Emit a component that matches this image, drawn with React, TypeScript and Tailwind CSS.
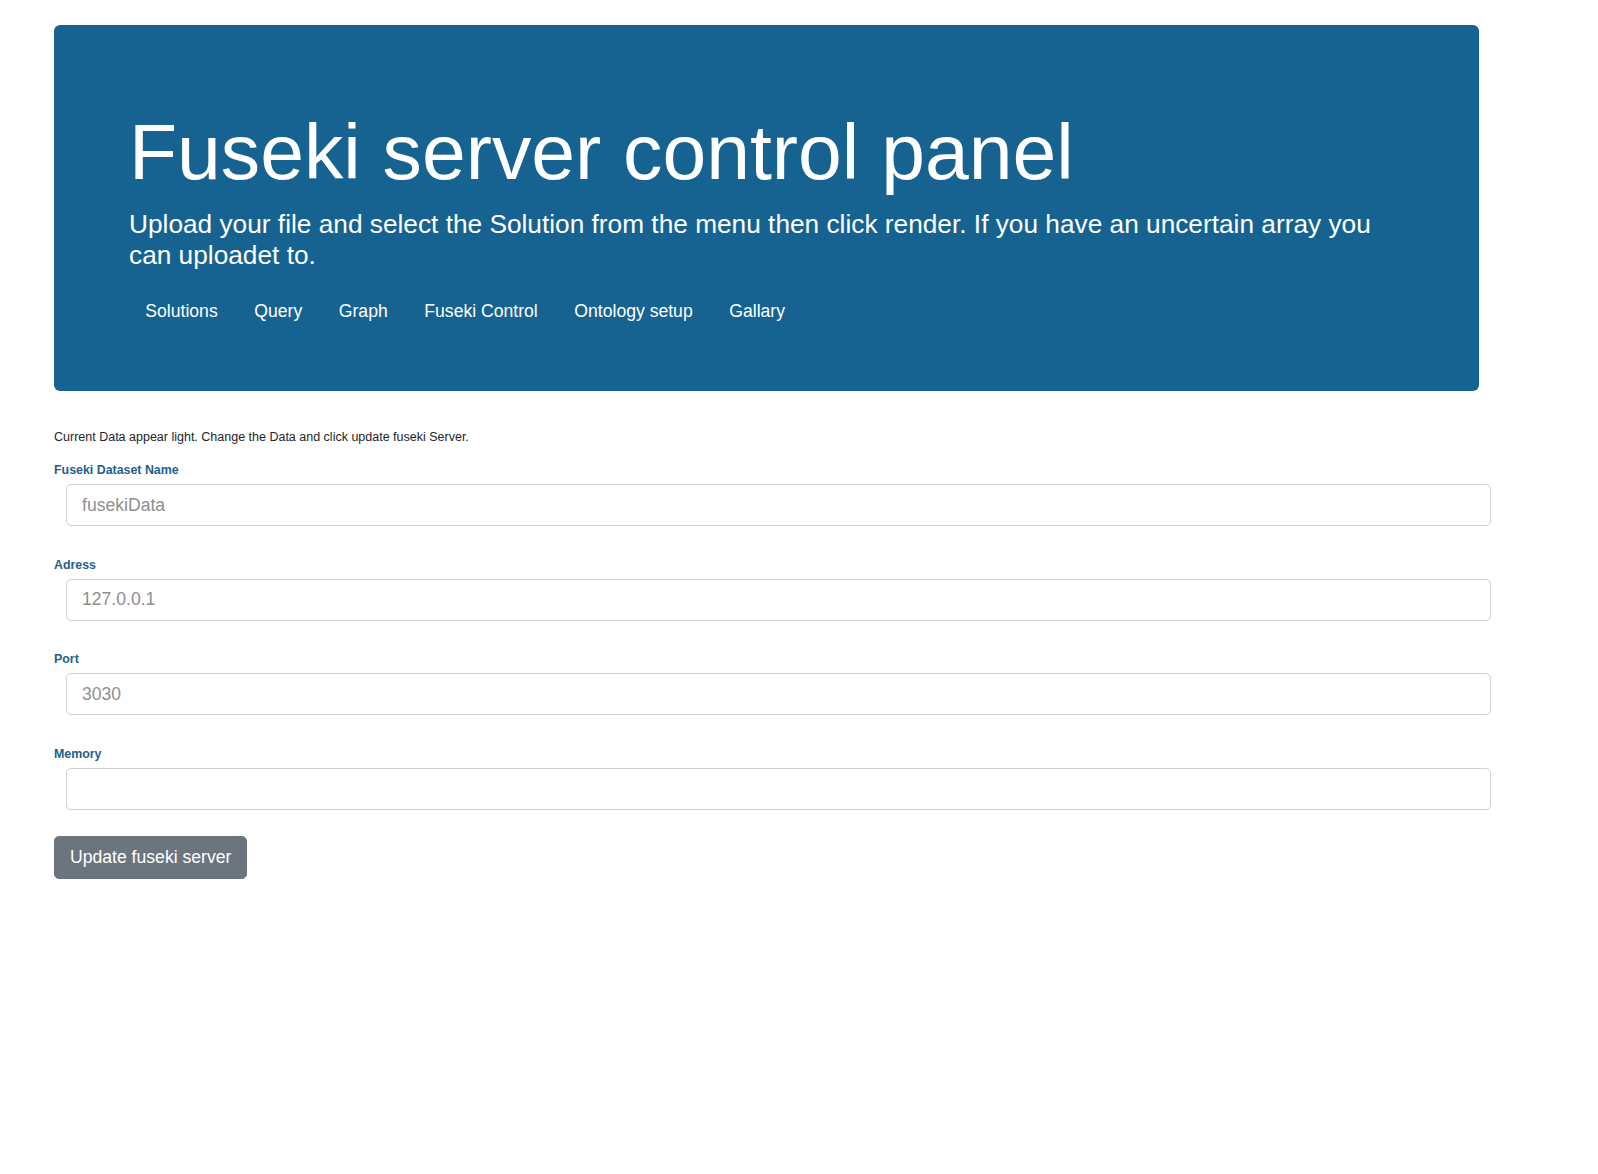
import React from 'react';

const navItems = ['Solutions', 'Query', 'Graph', 'Fuseki Control', 'Ontology setup', 'Gallary'];

const fields = [
  { label: 'Fuseki Dataset Name', placeholder: 'fusekiData' },
  { label: 'Adress', placeholder: '127.0.0.1' },
  { label: 'Port', placeholder: '3030' },
  { label: 'Memory', placeholder: '' },
];

const App: React.FC = () => {
  return (
    <div className="min-h-screen bg-white font-['Liberation_Sans',Arial,sans-serif] text-[#212529]">
      <div className="w-[1479px] pl-[54px] pt-[25px]">
        {/* Header banner */}
        <div className="bg-[#166391] rounded-[6px] pl-[75px] pr-[95px] pt-[80px] pb-[58.5px] text-white">
          <h1 className="text-[78.7px] leading-[1.2] font-normal">Fuseki server control panel</h1>
          <p className="mt-[9.5px] text-[26.25px] leading-[31px]">
            Upload your file and select the Solution from the menu then click render. If you have an uncertain array you can uploadet to.
          </p>
          <nav className="mt-[18px] -ml-[2px] flex">
            {navItems.map((item) => (
              <a key={item} href="#" className="px-[18.3px] py-[8.8px] text-[17.6px] leading-[26.4px] text-white">
                {item}
              </a>
            ))}
          </nav>
        </div>

        {/* Form */}
        <div className="mt-[36.5px]">
          <p className="text-[12.5px] leading-[19px]">
            Current Data appear light. Change the Data and click update fuseki Server.
          </p>
          <div className="mt-[14.5px] flex flex-col gap-[29.5px]">
            {fields.map((f) => (
              <div key={f.label}>
                <label className="block text-[12.4px] leading-[19px] font-bold text-[#1f5f8b] mb-[4px]">{f.label}</label>
                <div className="pl-[12px] -mr-[12px]">
                  <input
                    type="text"
                    placeholder={f.placeholder}
                    className="w-full h-[42px] border border-[#cfcfcf] rounded-[5px] px-[15px] text-[17.6px] placeholder:text-[#8f8f8f] outline-none"
                  />
                </div>
              </div>
            ))}
          </div>
          <button className="mt-[26px] h-[43px] rounded-[5px] bg-[#6c757d] border border-[#6c757d] px-[15px] text-[17.6px] leading-[26.4px] text-white">
            Update fuseki server
          </button>
        </div>
      </div>
    </div>
  );
};

export default App;
